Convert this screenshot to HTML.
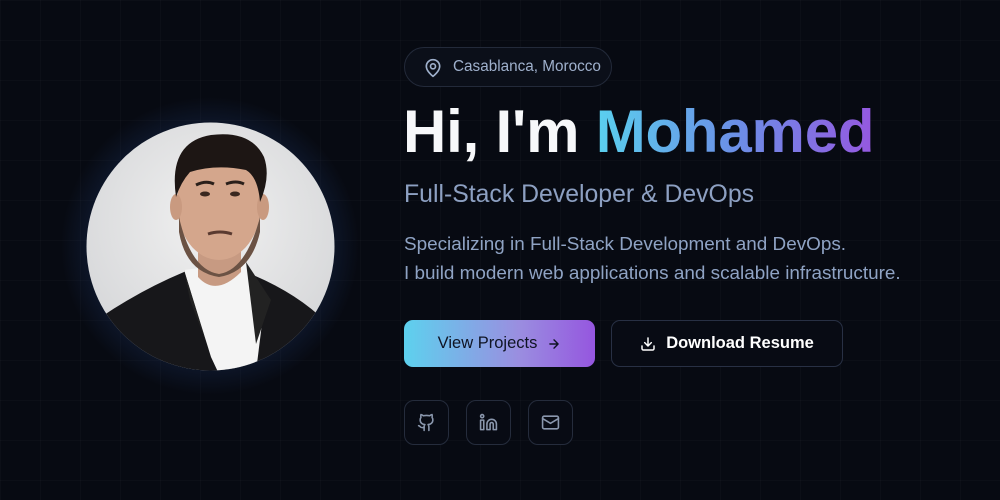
<!DOCTYPE html>
<html><head><style>
*{margin:0;padding:0;box-sizing:border-box}
body{width:1000px;height:500px;overflow:hidden;background:#070a12;font-family:"Liberation Sans",sans-serif;position:relative;
background-image:linear-gradient(rgba(255,255,255,0.018) 1px,transparent 1px),linear-gradient(90deg,rgba(255,255,255,0.018) 1px,transparent 1px);background-size:40px 40px}
.abs{position:absolute}
.badge{left:404px;top:47px;width:208px;height:40px;border:1px solid #232a3a;border-radius:20px;background:#0b0f19;color:#9fb0cc;font-size:15.3px;display:flex;align-items:center;padding-left:48px}
h1{left:403px;top:97px;font-size:60px;font-weight:bold;color:#f7f8fa;white-space:nowrap;letter-spacing:-0.2px}
h1 span{background:linear-gradient(90deg,#5ad0ee,#6b8fe6 50%,#9558e0);-webkit-background-clip:text;background-clip:text;color:transparent}
.sub{left:404px;top:181px;font-size:24.8px;color:#8da0c2}
.p{left:404px;top:230px;font-size:18.9px;color:#8fa3c4;line-height:29px}
.btn1{left:404px;top:320px;width:191px;height:47px;border-radius:9px;background:linear-gradient(90deg,#5dd1ee,#9a8ee0 60%,#9556df);color:#0f1424;font-size:16.5px;display:flex;align-items:center;justify-content:center;gap:10px}
.btn2{left:611px;top:320px;width:232px;height:47px;border-radius:9px;border:1px solid #283044;background:#080b14;color:#fff;font-size:16.5px;font-weight:bold;display:flex;align-items:center;justify-content:center;gap:10px}
.soc{top:400px;width:45px;height:45px;border:1px solid #252c3c;border-radius:10px;display:flex;align-items:center;justify-content:center;background:#080b14}
.glow{left:40px;top:76px;width:340px;height:340px;border-radius:50%;background:radial-gradient(circle,rgba(60,95,165,0.8) 36%,rgba(30,55,105,0.45) 42%,rgba(7,10,18,0) 62%)}
</style></head><body>
<div class="abs glow"></div>
<svg class="abs" style="left:86px;top:122px" width="249" height="249" viewBox="0 0 249 249">
<defs><clipPath id="c"><circle cx="124.5" cy="124.5" r="124"/></clipPath>
<radialGradient id="bg" cx="0.5" cy="0.4" r="0.6"><stop offset="0" stop-color="#f1f1f1"/><stop offset="1" stop-color="#d6d7d9"/></radialGradient></defs>
<g clip-path="url(#c)">
<rect width="249" height="249" fill="url(#bg)"/>
<path d="M0 249 L15 195 Q55 168 98 150 L160 150 Q210 170 240 200 L249 249Z" fill="#17171a"/>
<path d="M98 148 L125 235 L132 250 L170 250 L178 185 L160 140Z" fill="#f4f4f4"/>
<path d="M98 148 L120 220 L104 178Z" fill="#222"/>
<path d="M160 140 L185 178 L170 222Z" fill="#222"/>
<path d="M112 120 L112 155 Q130 175 155 150 L155 120Z" fill="#c79a82"/>
<ellipse cx="133" cy="82" rx="42" ry="56" fill="#d4a68c"/>
<ellipse cx="90" cy="85" rx="6" ry="13" fill="#c99a80"/><ellipse cx="177" cy="85" rx="6" ry="13" fill="#c99a80"/>
<path d="M93 95 Q105 148 133 152 Q160 148 174 95 L174 110 Q165 150 133 155 Q100 150 93 110Z" fill="#6b5244"/>
<path d="M90 75 Q82 20 125 13 Q165 8 178 35 Q185 55 174 80 Q172 55 160 48 Q130 42 104 50 Q95 60 90 75Z" fill="#1d1614"/>
<path d="M110 63 Q120 58 128 62" stroke="#2a1f1a" stroke-width="3" fill="none"/><path d="M140 62 Q150 58 158 62" stroke="#2a1f1a" stroke-width="3" fill="none"/>
<ellipse cx="119" cy="72" rx="5" ry="2.5" fill="#3a2820"/><ellipse cx="149" cy="72" rx="5" ry="2.5" fill="#3a2820"/>
<path d="M122 112 Q134 108 146 112" stroke="#5a3a30" stroke-width="3" fill="none"/>
</g></svg>
<div class="abs badge"><svg class="abs" style="left:18px;top:9px" width="20" height="22" viewBox="0 0 24 24" fill="none" stroke="#9fb0cc" stroke-width="2" stroke-linecap="round" stroke-linejoin="round"><path d="M20 10c0 6-8 12-8 12s-8-6-8-12a8 8 0 0 1 16 0Z"/><circle cx="12" cy="10" r="3"/></svg>Casablanca, Morocco</div>
<h1 class="abs">Hi, I'm <span>Mohamed</span></h1>
<div class="abs sub">Full-Stack Developer &amp; DevOps</div>
<div class="abs p">Specializing in Full-Stack Development and DevOps.<br>I build modern web applications and scalable infrastructure.</div>
<div class="abs btn1">View Projects <svg width="14" height="14" viewBox="0 0 24 24" fill="none" stroke="#0f1424" stroke-width="2.4" stroke-linecap="round" stroke-linejoin="round"><path d="M5 12h14M12 5l7 7-7 7"/></svg></div>
<div class="abs btn2"><svg width="16" height="16" viewBox="0 0 24 24" fill="none" stroke="#fff" stroke-width="2.2" stroke-linecap="round" stroke-linejoin="round"><path d="M21 15v4a2 2 0 0 1-2 2H5a2 2 0 0 1-2-2v-4"/><path d="M7 10l5 5 5-5M12 15V3"/></svg>Download Resume</div>
<div class="abs soc" style="left:404px"><svg width="19" height="19" viewBox="0 0 24 24" fill="none" stroke="#8a97ad" stroke-width="2" stroke-linecap="round" stroke-linejoin="round"><path d="M15 22v-4a4.8 4.8 0 0 0-1-3.5c3 0 6-2 6-5.5.08-1.25-.27-2.48-1-3.5.28-1.15.28-2.35 0-3.5 0 0-1 0-3 1.5-2.64-.5-5.36-.5-8 0C6 2 5 2 5 2c-.3 1.15-.3 2.35 0 3.5A5.4 5.4 0 0 0 4 9c0 3.5 3 5.5 6 5.5-.39.49-.68 1.05-.85 1.65S8.93 17.38 9 18v4"/><path d="M9 18c-4.51 2-5-2-7-2"/></svg></div>
<div class="abs soc" style="left:466px"><svg width="19" height="19" viewBox="0 0 24 24" fill="none" stroke="#8a97ad" stroke-width="2" stroke-linecap="round" stroke-linejoin="round"><path d="M16 8a6 6 0 0 1 6 6v7h-4v-7a2 2 0 0 0-4 0v7h-4v-7a6 6 0 0 1 6-6z"/><rect x="2" y="9" width="4" height="12"/><circle cx="4" cy="4" r="2"/></svg></div>
<div class="abs soc" style="left:528px"><svg width="19" height="19" viewBox="0 0 24 24" fill="none" stroke="#8a97ad" stroke-width="2" stroke-linecap="round" stroke-linejoin="round"><rect x="2" y="4" width="20" height="16" rx="2"/><path d="m22 7-10 6L2 7"/></svg></div>
</body></html>
